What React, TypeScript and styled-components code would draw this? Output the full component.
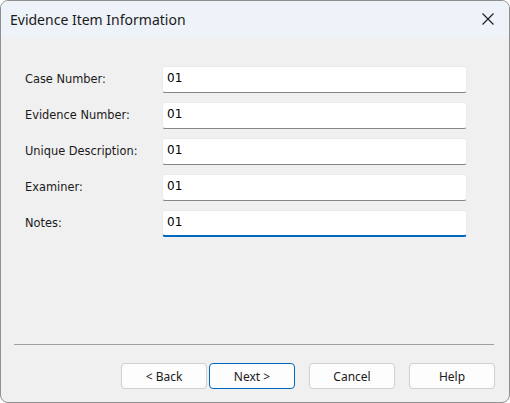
import React from "react";
import styled, { createGlobalStyle } from "styled-components";

const Global = createGlobalStyle`
  html, body { margin: 0; padding: 0; background: #ffffff; }
  body { font-family: "Noto Sans", "Open Sans", sans-serif; }
  * { box-sizing: border-box; }
`;

const Window = styled.div`
  width: 510px;
  height: 403px;
  border: 1px solid #8f8f8f;
  border-radius: 8px;
  background: #f0f0f0;
  display: flex;
  flex-direction: column;
  overflow: hidden;
`;

const TitleBar = styled.div`
  height: 36px;
  background: #eef2f9;
  display: flex;
  align-items: center;
  justify-content: space-between;
  padding: 0 14px 0 9px;
  flex-shrink: 0;
`;

const Title = styled.span`
  font-family: "Noto Sans", sans-serif;
  font-size: 14px;
  color: #1a1a1a;
`;

const CloseBtn = styled.div`
  width: 14px;
  height: 14px;
  display: flex;
  align-items: center;
  justify-content: center;
`;

const Body = styled.div`
  flex: 1;
  display: flex;
  flex-direction: column;
  padding: 29px 14px 13px 11px;
`;

const Form = styled.div`
  display: grid;
  grid-template-columns: 137px 305px;
  row-gap: 9px;
  padding-left: 13px;
  flex: 1;
  align-content: start;
`;

const Label = styled.label`
  font-family: "DejaVu Sans", Tahoma, sans-serif;
  font-size: 11.4px;
  color: #1a1a1a;
  display: flex;
  align-items: center;
  height: 27px;
  padding-bottom: 2px;
`;

const Field = styled.div<{ $focused?: boolean }>`
  height: 27px;
  background: #ffffff;
  border: 1px solid #ebebeb;
  border-bottom: ${(p) => (p.$focused ? "2px solid #0067c0" : "1px solid #868686")};
  border-radius: 3px;
  font-family: "DejaVu Sans", Tahoma, sans-serif;
  font-size: 12px;
  color: #000000;
  padding: 4px 0 0 4px;
`;

const Separator = styled.div`
  height: 1px;
  background: #a0a0a0;
  margin: 0 1px 18px 2px;
`;

const Buttons = styled.div`
  display: flex;
  justify-content: flex-end;
  gap: 14px;
`;

const Pair = styled.div`
  display: flex;
  gap: 2px;
`;

const Button = styled.button<{ $primary?: boolean }>`
  width: 86px;
  height: 26px;
  background: #fdfdfd;
  border: 1px solid ${(p) => (p.$primary ? "#0067c0" : "#d0d0d0")};
  border-radius: 4px;
  font-family: "Noto Sans", sans-serif;
  font-size: 12px;
  color: #1a1a1a;
  padding: 0;
`;

const fields = [
  { label: "Case Number:", value: "01" },
  { label: "Evidence Number:", value: "01" },
  { label: "Unique Description:", value: "01" },
  { label: "Examiner:", value: "01" },
  { label: "Notes:", value: "01", focused: true },
];

export default function App() {
  return (
    <>
      <Global />
      <Window>
        <TitleBar>
          <Title>Evidence Item Information</Title>
          <CloseBtn>
            <svg width="12" height="12" viewBox="0 0 12 12">
              <path d="M0.5 0.5 L11.5 11.5 M11.5 0.5 L0.5 11.5" stroke="#1a1a1a" strokeWidth="1.1" />
            </svg>
          </CloseBtn>
        </TitleBar>
        <Body>
          <Form>
            {fields.map((f) => (
              <React.Fragment key={f.label}>
                <Label>{f.label}</Label>
                <Field $focused={f.focused}>{f.value}</Field>
              </React.Fragment>
            ))}
          </Form>
          <Separator />
          <Buttons>
            <Pair>
              <Button>&lt; Back</Button>
              <Button $primary>Next &gt;</Button>
            </Pair>
            <Button>Cancel</Button>
            <Button>Help</Button>
          </Buttons>
        </Body>
      </Window>
    </>
  );
}
